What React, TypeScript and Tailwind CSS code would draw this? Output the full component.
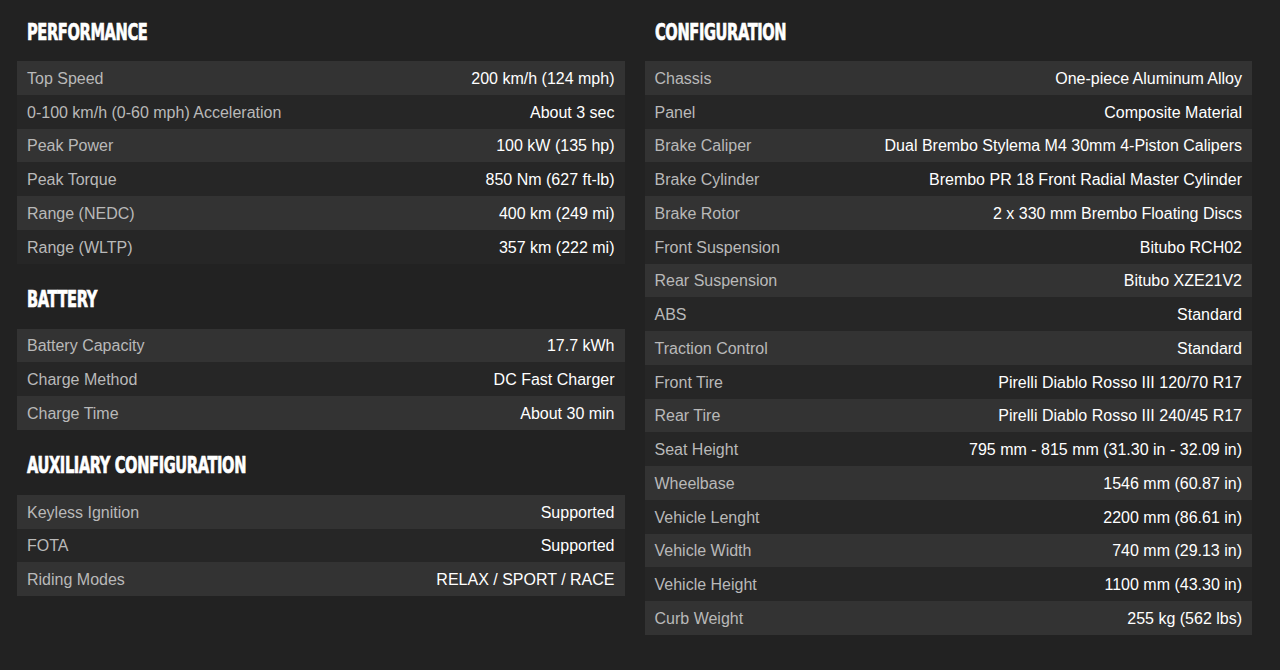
import React from "react";

type Row = [string, string];

const performance: Row[] = [
  ["Top Speed", "200 km/h (124 mph)"],
  ["0-100 km/h (0-60 mph) Acceleration", "About 3 sec"],
  ["Peak Power", "100 kW (135 hp)"],
  ["Peak Torque", "850 Nm (627 ft-lb)"],
  ["Range (NEDC)", "400 km (249 mi)"],
  ["Range (WLTP)", "357 km (222 mi)"],
];

const battery: Row[] = [
  ["Battery Capacity", "17.7 kWh"],
  ["Charge Method", "DC Fast Charger"],
  ["Charge Time", "About 30 min"],
];

const auxiliary: Row[] = [
  ["Keyless Ignition", "Supported"],
  ["FOTA", "Supported"],
  ["Riding Modes", "RELAX / SPORT / RACE"],
];

const configuration: Row[] = [
  ["Chassis", "One-piece Aluminum Alloy"],
  ["Panel", "Composite Material"],
  ["Brake Caliper", "Dual Brembo Stylema M4 30mm 4-Piston Calipers"],
  ["Brake Cylinder", "Brembo PR 18 Front Radial Master Cylinder"],
  ["Brake Rotor", "2 x 330 mm Brembo Floating Discs"],
  ["Front Suspension", "Bitubo RCH02"],
  ["Rear Suspension", "Bitubo XZE21V2"],
  ["ABS", "Standard"],
  ["Traction Control", "Standard"],
  ["Front Tire", "Pirelli Diablo Rosso III 120/70 R17"],
  ["Rear Tire", "Pirelli Diablo Rosso III 240/45 R17"],
  ["Seat Height", "795 mm - 815 mm (31.30 in - 32.09 in)"],
  ["Wheelbase", "1546 mm (60.87 in)"],
  ["Vehicle Lenght", "2200 mm (86.61 in)"],
  ["Vehicle Width", "740 mm (29.13 in)"],
  ["Vehicle Height", "1100 mm (43.30 in)"],
  ["Curb Weight", "255 kg (562 lbs)"],
];

function Heading({ children }: { children: React.ReactNode }) {
  return (
    <div className="h-[40px] mb-[9px] flex items-center pl-[10px]">
      <h2 className="font-['DejaVu_Sans_Condensed',sans-serif] font-bold text-[21px] leading-none text-white tracking-[-0.5px] inline-block origin-left scale-x-[0.775] scale-y-[1.1] whitespace-nowrap [-webkit-text-stroke:0.6px_white]">
        {children}
      </h2>
    </div>
  );
}

function Table({ rows }: { rows: Row[] }) {
  return (
    <div className="flex flex-col">
      {rows.map(([k, v], i) => (
        <div
          key={k}
          className={`h-[33.75px] flex items-center justify-between px-[10px] pt-[2px] text-[16px] ${
            i % 2 === 0 ? "bg-[#333333]" : "bg-[#262626]"
          }`}
        >
          <span className="text-[#b9b9b9] whitespace-nowrap">{k}</span>
          <span className="text-white whitespace-nowrap">{v}</span>
        </div>
      ))}
    </div>
  );
}

export default function App() {
  return (
    <div className="w-[1280px] h-[670px] bg-[#222222] font-['Liberation_Sans',Arial,sans-serif] flex gap-[20px] pl-[17px] pr-[28px] pt-[12px] overflow-hidden">
      <div className="flex-1 flex flex-col">
        <Heading>PERFORMANCE</Heading>
        <Table rows={performance} />
        <div className="mt-[16px]">
          <Heading>BATTERY</Heading>
        </div>
        <Table rows={battery} />
        <div className="mt-[16px]">
          <Heading>AUXILIARY CONFIGURATION</Heading>
        </div>
        <Table rows={auxiliary} />
      </div>
      <div className="flex-1 flex flex-col">
        <Heading>CONFIGURATION</Heading>
        <Table rows={configuration} />
      </div>
    </div>
  );
}
